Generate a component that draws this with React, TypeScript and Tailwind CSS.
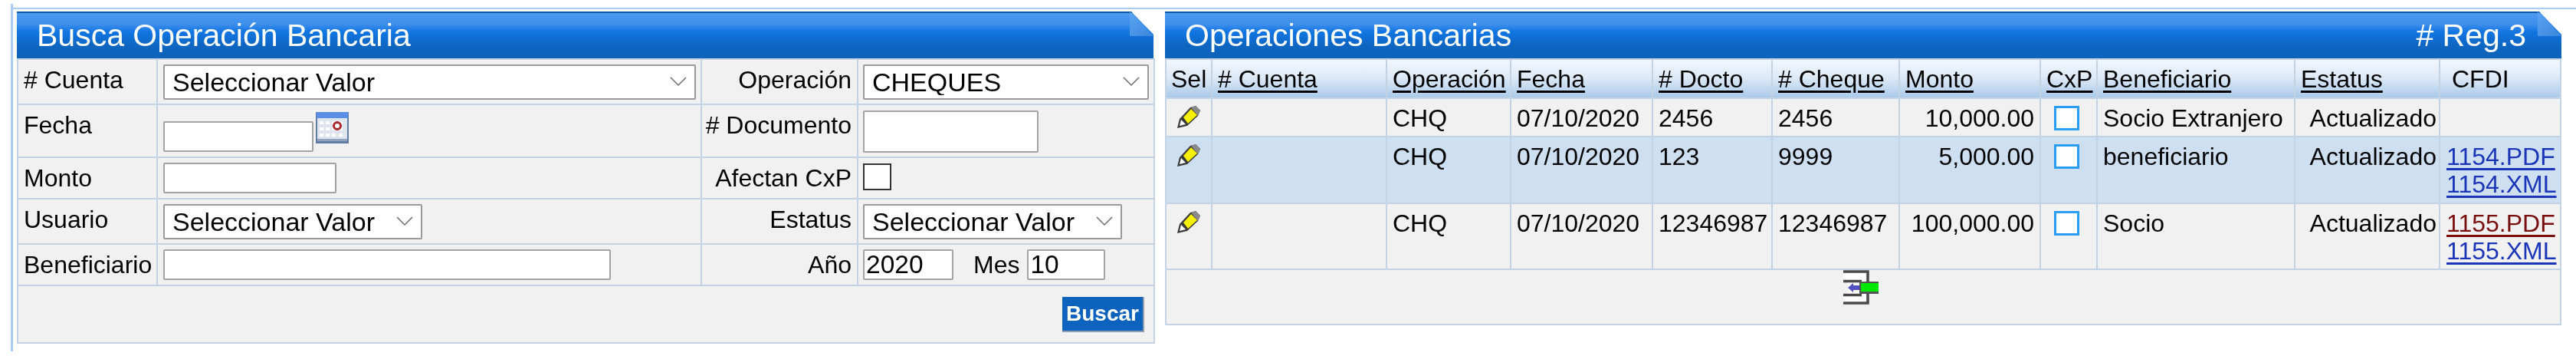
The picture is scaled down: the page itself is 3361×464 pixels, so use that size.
const headerBar = "h-[61px] flex items-center justify-between border-t-2 border-[#0b57a4] bg-[linear-gradient(#4c9af0_0%,#3d8eeb_25%,#1075e2_42%,#0e66c2_72%,#0e62b8_100%)] [clip-path:polygon(0_0,calc(100%-29px)_0,100%_30px,100%_100%,0_100%)] text-white text-[41px] leading-none";

function Fold() {
  return (
    <div className="absolute right-0 top-0 w-[31px] h-[32px] bg-[linear-gradient(135deg,#5ba4f2,#3a86dc)] [clip-path:polygon(0_0,100%_100%,0_100%)] shadow-lg" />
  );
}

function Panel({ title, right, children, width }: { title: string; right?: string; children: React.ReactNode; width: string }) {
  return (
    <div className={width}>
      <div className="relative">
        <div className={headerBar}>
          <span className="pl-[26px]">{title}</span>
          {right && <span className="pr-[46px]">{right}</span>}
        </div>
        <Fold />
      </div>
      {children}
    </div>
  );
}

function Chevron() {
  return (
    <svg className="absolute right-[12px] top-[15px] pointer-events-none" width="22" height="14" viewBox="0 0 22 14" fill="none" stroke="#6b6b6b" strokeWidth="1.5">
      <path d="M1 2l10 10L21 2" />
    </svg>
  );
}

function Select({ value, w }: { value: string; w: string }) {
  return (
    <div className={`relative h-[46px] ${w}`}>
      <select className="appearance-none w-full h-full bg-white border-2 border-[#9a9a9a] pl-[10px] text-[34px] leading-none text-black rounded-[2px]" defaultValue={value}>
        <option>{value}</option>
      </select>
      <Chevron />
    </div>
  );
}

function Input({ cls, value }: { cls: string; value?: string }) {
  return (
    <input
      readOnly
      value={value ?? ""}
      className={`block bg-white border-2 border-[#a3a3a3] rounded-[2px] px-[2px] text-[33.5px] text-black ${cls}`}
    />
  );
}

function Calendar() {
  return (
    <svg className="ml-[3px]" width="43" height="41" viewBox="0 0 43 41">
      <rect x="0" y="0" width="43" height="41" fill="#5f7ea6" />
      <rect x="1" y="0" width="41" height="8" fill="#5b8fe6" />
      <rect x="2" y="8" width="39" height="29" fill="#dfe5ee" />
      {[12, 20, 28].map((y) =>
        [5, 13, 21, 30].map((x) => <rect key={x + "-" + y} x={x} y={y} width="5" height="4" fill="#ffffff" />)
      )}
      <circle cx="28" cy="18" r="4.5" fill="#fff" stroke="#a92a2a" strokeWidth="3" />
      <rect x="2" y="35" width="39" height="3" fill="#8fa3bd" />
    </svg>
  );
}

function Pencil() {
  return (
    <svg width="30" height="30" viewBox="0 0 30 30">
      <path d="M0 29l3-12L17 2l7-2 6 6-3 7-14 13z" fill="#3a3a3a" />
      <path d="M3 26l2-8 6 6z" fill="#fff" />
      <path d="M18 2l6-2 6 6-3 7z" fill="#8a8a8a" />
      <path d="M8 15L18 4l8 8-12 11z" fill="#f7f000" />
    </svg>
  );
}

function ExportIcon() {
  return (
    <svg width="46" height="45" viewBox="0 0 46 45">
      <rect x="0" y="4" width="29" height="12" fill="#fff" />
      <rect x="0" y="33" width="29" height="9" fill="#fff" />
      <rect x="6" y="16" width="16" height="17" fill="#fff" />
      <path d="M0 2h32v41H0M0 14.5h24M0 32.5h24" fill="none" stroke="#4a4a4a" strokeWidth="3.5" />
      <path d="M6 23l7-6v3h8v6h-8v3z" fill="#5050c4" />
      <rect x="21" y="15" width="25" height="16" fill="#555" />
      <rect x="23" y="17" width="23" height="11" fill="#00e800" />
    </svg>
  );
}

function Check() {
  return <div className="w-[33px] h-[32px] ml-[17px] mt-[9px] bg-white border-[3px] border-[#2a9df4]" />;
}

const lb = "border-2 border-[#c3d3e3] p-0 align-top";
const labelL = `${lb} pl-[7px] pt-[8px]`;
const labelR = `${lb} pr-[7px] pt-[8px] text-right`;

function SearchForm() {
  return (
    <table className="table-fixed border-collapse w-[1483px] bg-[#f1f1f1] text-[32px] leading-[36px] text-black">
      <colgroup>
        <col className="w-[182px]" />
        <col className="w-[710px]" />
        <col className="w-[204px]" />
        <col className="w-[387px]" />
      </colgroup>
      <tbody>
        <tr className="h-[59px]">
          <td className={labelL}># Cuenta</td>
          <td className={`${lb} pl-[7px] pt-[6px]`}><Select value="Seleccionar Valor" w="w-[695px]" /></td>
          <td className={labelR}>Operación</td>
          <td className={`${lb} pl-[6px] pt-[6px]`}><Select value="CHEQUES" w="w-[373px]" /></td>
        </tr>
        <tr className="h-[69px]">
          <td className={labelL}>Fecha</td>
          <td className={`${lb} pl-[7px] pt-[9px]`}>
            <div className="flex items-start">
              <Input cls="w-[196px] h-[40px] mt-[12px]" />
              <Calendar />
            </div>
          </td>
          <td className={labelR}># Documento</td>
          <td className={`${lb} pl-[6px] pt-[7px]`}><Input cls="w-[229px] h-[55px]" /></td>
        </tr>
        <tr className="h-[54px]">
          <td className={labelL}>Monto</td>
          <td className={`${lb} pl-[7px] pt-[6px]`}><Input cls="w-[226px] h-[40px]" /></td>
          <td className={labelR}>Afectan CxP</td>
          <td className={`${lb} pl-[6px] pt-[7px]`}><div className="w-[37px] h-[35px] bg-white border-2 border-[#333]" /></td>
        </tr>
        <tr className="h-[59px]">
          <td className={labelL}>Usuario</td>
          <td className={`${lb} pl-[7px] pt-[6px]`}><Select value="Seleccionar Valor" w="w-[338px]" /></td>
          <td className={labelR}>Estatus</td>
          <td className={`${lb} pl-[6px] pt-[6px]`}><Select value="Seleccionar Valor" w="w-[338px]" /></td>
        </tr>
        <tr className="h-[54px]">
          <td className={labelL}>Beneficiario</td>
          <td className={`${lb} pl-[7px] pt-[6px]`}><Input cls="w-[584px] h-[40px]" /></td>
          <td className={labelR}>Año</td>
          <td className={`${lb} pl-[6px] pt-[6px]`}>
            <div className="flex items-center">
              <Input cls="w-[118px] h-[40px]" value="2020" />
              <span className="ml-[26px] mr-[10px]">Mes</span>
              <Input cls="w-[102px] h-[40px]" value="10" />
            </div>
          </td>
        </tr>
        <tr className="h-[75px]">
          <td colSpan={4} className={`${lb} pr-[12px] pt-[14px]`}>
            <div className="flex justify-end">
              <button className="w-[107px] h-[46px] bg-[#0d62be] border-b-2 border-r-2 border-[#8f9fb0] text-white font-bold text-[28px] leading-none">Buscar</button>
            </div>
          </td>
        </tr>
      </tbody>
    </table>
  );
}

const columns = [
  { label: "Sel", w: "w-[60px]" },
  { label: "# Cuenta", w: "w-[228px]", link: true },
  { label: "Operación", w: "w-[162px]", link: true },
  { label: "Fecha", w: "w-[185px]", link: true },
  { label: "# Docto", w: "w-[156px]", link: true },
  { label: "# Cheque", w: "w-[166px]", link: true },
  { label: "Monto", w: "w-[184px]", link: true },
  { label: "CxP", w: "w-[74px]", link: true },
  { label: "Beneficiario", w: "w-[258px]", link: true },
  { label: "Estatus", w: "w-[189px]", link: true },
  { label: "CFDI", w: "w-[158px]" },
];

const rows = [
  { h: "h-[50px]", bg: "bg-[#f1f1f1]", docto: "2456", cheque: "2456", monto: "10,000.00", ben: "Socio Extranjero", files: [] as { name: string; seen?: boolean }[] },
  { h: "h-[87px]", bg: "bg-[#cddff0]", docto: "123", cheque: "9999", monto: "5,000.00", ben: "beneficiario", files: [{ name: "1154.PDF" }, { name: "1154.XML" }] },
  { h: "h-[86px]", bg: "bg-[#f1f1f1]", docto: "12346987", cheque: "12346987", monto: "100,000.00", ben: "Socio", files: [{ name: "1155.PDF", seen: true }, { name: "1155.XML" }] },
];

const td = `${lb} pl-[7px] pr-[7px] pt-[7px]`;

function ResultsTable() {
  return (
    <table className="table-fixed border-collapse w-[1822px] text-[32px] leading-[36px] text-black">
      <colgroup>
        {columns.map((c) => <col key={c.label} className={c.w} />)}
      </colgroup>
      <thead>
        <tr className="h-[51px] bg-[linear-gradient(#f2f7fd,#dfeaf7_45%,#a9c9ea)]">
          {columns.map((c) => (
            <th key={c.label} className={`${lb} ${c.label === "CFDI" ? "pl-[15px]" : c.label === "Sel" ? "pl-[6px]" : "pl-[7px]"} pt-[7px] text-left font-normal whitespace-nowrap`}>
              <span className={c.link ? "underline decoration-[3px] underline-offset-[4px]" : ""}>{c.label}</span>
            </th>
          ))}
        </tr>
      </thead>
      <tbody>
        {rows.map((r) => (
          <tr key={r.docto} className={`${r.h} ${r.bg}`}>
            <td className={`${lb} pl-[14px] pt-[9px]`}><Pencil /></td>
            <td className={td}></td>
            <td className={td}>CHQ</td>
            <td className={td}>07/10/2020</td>
            <td className={td}>{r.docto}</td>
            <td className={td}>{r.cheque}</td>
            <td className={`${td} text-right`}>{r.monto}</td>
            <td className={lb}><Check /></td>
            <td className={`${td} whitespace-nowrap`}>{r.ben}</td>
            <td className={`${lb} pr-[3px] pt-[7px] text-right`}>Actualizado</td>
            <td className={`${lb} pl-[8px] pt-[7px] whitespace-nowrap`}>
              {r.files.map((f) => (
                <div key={f.name}>
                  <a href="#" className={`underline decoration-[3px] underline-offset-[4px] ${f.seen ? "text-[#7a0f0f]" : "text-[#1a35b8]"}`}>{f.name}</a>
                </div>
              ))}
            </td>
          </tr>
        ))}
        <tr className="h-[72px] bg-[#f1f1f1]">
          <td colSpan={11} className={`${lb} align-middle`}>
            <div className="flex justify-center pr-[6px]"><ExportIcon /></div>
          </td>
        </tr>
      </tbody>
    </table>
  );
}

export default function App() {
  return (
    <div className="w-[3361px] h-[464px] bg-white font-['Liberation_Sans',Arial,sans-serif] overflow-hidden pl-[14px] pt-[5px] blur-[0.5px]">
      <div className="h-[453px] border-l-[3px] border-[#a9cdf5]">
        <div className="pt-[5px]">
          <div className="h-[2px] bg-[#a9cdf5]" />
        </div>
        <div className="flex pl-[5px] pt-[3px] gap-[15px]">
          <Panel title="Busca Operación Bancaria" width="w-[1483px]"><SearchForm /></Panel>
          <Panel title="Operaciones Bancarias" right="# Reg.3" width="w-[1822px]"><ResultsTable /></Panel>
        </div>
      </div>
    </div>
  );
}
